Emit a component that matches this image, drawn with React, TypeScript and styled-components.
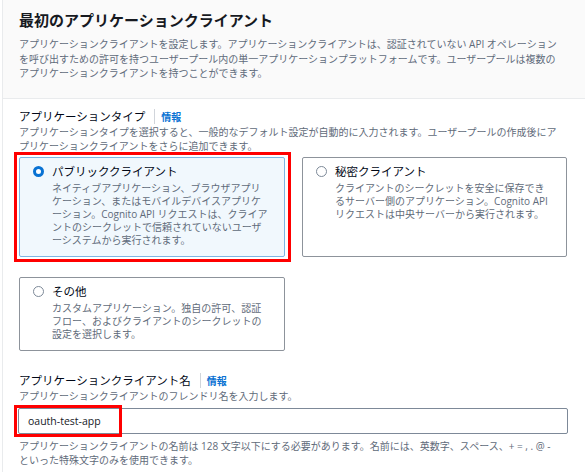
import React from "react";
import styled, { createGlobalStyle } from "styled-components";

const Global = createGlobalStyle`
  html, body { margin: 0; padding: 0; background: #ffffff; }
  body { font-family: "Open Sans", "Noto Sans CJK JP", sans-serif; }
`;

const Page = styled.div`
  width: 585px;
  height: 472px;
  overflow: hidden;
  padding-left: 2px;
  box-sizing: border-box;
  background: #ffffff;
`;

const Panel = styled.div`
  border-left: 1px solid #e9ebed;
  height: 100%;
  box-sizing: border-box;
`;

const Header = styled.div`
  background: #fafafa;
  border-bottom: 1px solid #e9ebed;
  padding: 10px 16px 17px 16px;
`;

const Title = styled.h2`
  margin: 0;
  font-size: 15px;
  line-height: 20px;
  font-weight: 700;
  color: #16191f;
`;

const Desc = styled.p<{ $top?: number; $lh?: number }>`
  margin: ${(p) => p.$top ?? 0}px 0 0 0;
  font-size: 10px;
  line-height: ${(p) => p.$lh ?? 14.5}px;
  color: #5f6b7a;
  white-space: nowrap;
`;

const Body = styled.div`
  padding: 10px 17px 0 16px;
`;

const LabelRow = styled.div`
  display: flex;
  align-items: center;
  height: 16px;
`;

const Label = styled.span`
  font-size: 11.5px;
  line-height: 16px;
  color: #000716;
`;

const Divider = styled.span`
  width: 1px;
  height: 15px;
  background: #d1d5db;
  margin: 0 6px 0 9px;
`;

const InfoLink = styled.span`
  font-size: 10px;
  font-weight: 700;
  color: #0972d3;
`;

const Grid = styled.div`
  display: grid;
  grid-template-columns: 266px 265px;
  column-gap: 17px;
  row-gap: 20px;
  margin-top: 3px;
`;

const Card = styled.div<{ $selected?: boolean; $marked?: boolean }>`
  position: relative;
  box-sizing: border-box;
  display: flex;
  gap: 8px;
  padding: 5px 10px 9px 13px;
  border: 1px solid ${(p) => (p.$selected ? "#7db5e3" : "#8d939b")};
  border-radius: 2px;
  background: ${(p) => (p.$selected ? "#f1f8fd" : "#ffffff")};
  ${(p) =>
    p.$marked
      ? `&::after {
          content: "";
          position: absolute;
          left: -6px;
          top: -6px;
          right: -7px;
          bottom: -6px;
          border: 3px solid #ff0000;
          pointer-events: none;
        }`
      : ""}
`;

const Radio = styled.span<{ $checked?: boolean }>`
  flex: none;
  box-sizing: border-box;
  width: 11px;
  height: 11px;
  margin-top: 3.5px;
  border-radius: 50%;
  border: ${(p) => (p.$checked ? "3.5px solid #0972d3" : "1.5px solid #7d8998")};
  background: #ffffff;
`;

const CardText = styled.div`
  display: flex;
  flex-direction: column;
`;

const CardTitle = styled.div`
  font-size: 11.5px;
  line-height: 18px;
  color: #000716;
`;

const NameSection = styled.div`
  margin-top: 22px;
`;

const InputWrap = styled.div`
  position: relative;
  margin-top: 4.5px;
  margin-left: -1px;
`;

const Input = styled.div`
  box-sizing: border-box;
  height: 26px;
  border: 1px solid #7d8998;
  border-radius: 2px;
  padding: 0 9px;
  display: flex;
  align-items: center;
  font-size: 10.5px;
  color: #16191f;
  background: #ffffff;
`;

const Mark = styled.div`
  position: absolute;
  left: -4px;
  top: -3px;
  width: 108px;
  height: 32px;
  border: 3px solid #ff0000;
  box-sizing: border-box;
  pointer-events: none;
`;

const Lines = ({ lines }: { lines: string[] }) => (
  <>
    {lines.map((l, i) => (
      <React.Fragment key={i}>
        {l}
        {i < lines.length - 1 && <br />}
      </React.Fragment>
    ))}
  </>
);

const options = [
  {
    title: "パブリッククライアント",
    selected: true,
    lines: [
      "ネイティブアプリケーション、ブラウザアプリ",
      "ケーション、またはモバイルデバイスアプリケ",
      "ーション。Cognito API リクエストは、クライア",
      "ントのシークレットで信頼されていないユーザ",
      "ーシステムから実行されます。",
    ],
  },
  {
    title: "秘密クライアント",
    selected: false,
    lines: [
      "クライアントのシークレットを安全に保存でき",
      "るサーバー側のアプリケーション。Cognito API",
      "リクエストは中央サーバーから実行されます。",
    ],
  },
  {
    title: "その他",
    selected: false,
    lines: [
      "カスタムアプリケーション。独自の許可、認証",
      "フロー、およびクライアントのシークレットの",
      "設定を選択します。",
    ],
  },
];

export default function App() {
  return (
    <Page>
      <Global />
      <Panel>
        <Header>
          <Title>最初のアプリケーションクライアント</Title>
          <Desc $top={7}>
            <Lines
              lines={[
                "アプリケーションクライアントを設定します。アプリケーションクライアントは、認証されていない API オペレーション",
                "を呼び出すための許可を持つユーザープール内の単一アプリケーションプラットフォームです。ユーザープールは複数の",
                "アプリケーションクライアントを持つことができます。",
              ]}
            />
          </Desc>
        </Header>
        <Body>
          <LabelRow>
            <Label>アプリケーションタイプ</Label>
            <Divider />
            <InfoLink>情報</InfoLink>
          </LabelRow>
          <Desc>
            <Lines
              lines={[
                "アプリケーションタイプを選択すると、一般的なデフォルト設定が自動的に入力されます。ユーザープールの作成後にア",
                "プリケーションクライアントをさらに追加できます。",
              ]}
            />
          </Desc>
          <Grid>
            {options.map((o) => (
              <Card key={o.title} $selected={o.selected} $marked={o.selected}>
                <Radio $checked={o.selected} />
                <CardText>
                  <CardTitle>{o.title}</CardTitle>
                  <Desc $top={1} $lh={13}>
                    <Lines lines={o.lines} />
                  </Desc>
                </CardText>
              </Card>
            ))}
          </Grid>
          <NameSection>
            <LabelRow>
              <Label>アプリケーションクライアント名</Label>
              <Divider />
              <InfoLink>情報</InfoLink>
            </LabelRow>
            <Desc>アプリケーションクライアントのフレンドリ名を入力します。</Desc>
            <InputWrap>
              <Input>oauth-test-app</Input>
              <Mark />
            </InputWrap>
            <Desc $top={5}>
              <Lines
                lines={[
                  "アプリケーションクライアントの名前は 128 文字以下にする必要があります。名前には、英数字、スペース、+ = , . @ -",
                  "といった特殊文字のみを使用できます。",
                ]}
              />
            </Desc>
          </NameSection>
        </Body>
      </Panel>
    </Page>
  );
}
